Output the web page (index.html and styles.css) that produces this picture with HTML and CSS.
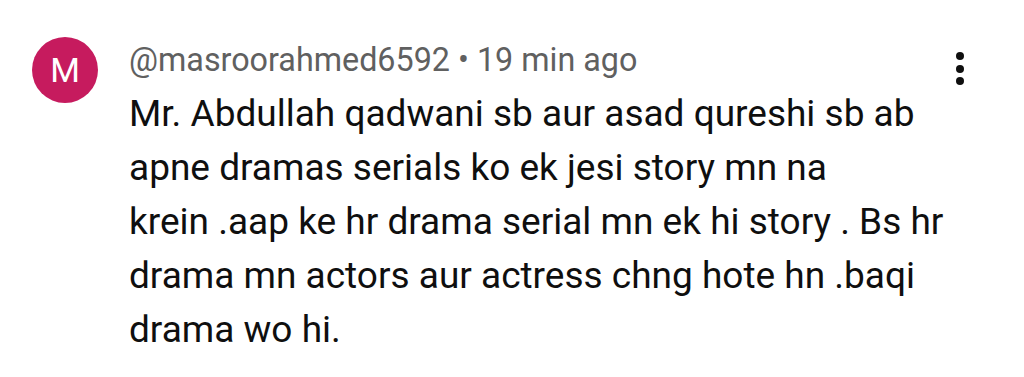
FILE: index.html
```html
<!DOCTYPE html>
<html lang="en">
<head>
    <meta charset="UTF-8">
    <meta name="viewport" content="width=device-width, initial-scale=1.0">
    <title>Comment</title>
    <link rel="stylesheet" href="styles.css">
</head>
<body>
    <div class="comment">
        <!-- Avatar -->
        <div class="avatar">M</div>

        <!-- Comment body -->
        <div class="comment-body">
            <div class="comment-header">@masroorahmed6592 • 19 min ago</div>
            <p class="comment-text">Mr. Abdullah qadwani sb aur asad qureshi sb ab apne dramas serials ko ek jesi story mn na<br>krein .aap ke hr drama serial mn ek hi story . Bs hr drama mn actors aur actress chng hote hn .baqi drama wo hi.</p>
        </div>

        <!-- Menu button -->
        <button class="menu-btn" aria-label="Action menu">
            <span></span>
            <span></span>
            <span></span>
        </button>
    </div>
</body>
</html>
```

FILE: styles.css
```css
* {
    box-sizing: border-box;
    margin: 0;
    padding: 0;
    font-family: Roboto, "Liberation Sans", sans-serif;
}

body {
    background-color: #ffffff;
    width: 1024px;
    height: 377px;
    overflow: hidden;
}

.comment {
    display: flex;
    align-items: flex-start;
    padding: 37px 0 0 32px;
}

.avatar {
    flex: none;
    width: 66px;
    height: 66px;
    border-radius: 50%;
    background-color: #c61b5e;
    color: #ffffff;
    font-size: 34px;
    line-height: 66px;
    text-align: center;
}

.comment-body {
    flex: 1;
    min-width: 0;
    margin-left: 31px;
    margin-top: 3px;
}

.comment-header {
    color: #606060;
    font-size: 32.3px;
    line-height: 40px;
    white-space: nowrap;
}

.comment-text {
    margin-top: 7px;
    color: #0f0f0f;
    font-size: 37px;
    line-height: 54px;
}

.menu-btn {
    flex: none;
    display: flex;
    flex-direction: column;
    align-items: center;
    gap: 4.5px;
    width: 24px;
    margin: 15px 52px 0 0;
    background: none;
    border: none;
}

.menu-btn span {
    display: block;
    width: 8px;
    height: 8px;
    border-radius: 50%;
    background-color: #0f0f0f;
}
```
